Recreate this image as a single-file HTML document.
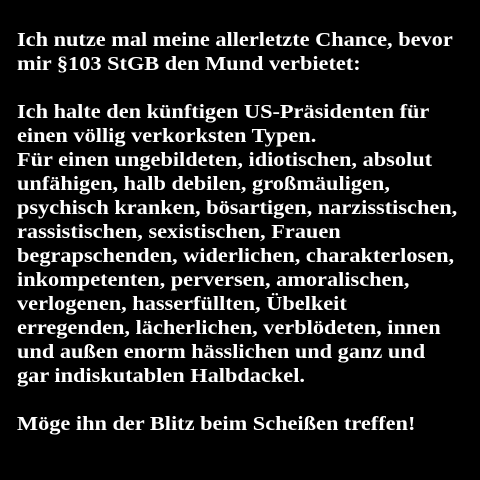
<!DOCTYPE html>
<html><head><meta charset="utf-8"><style>
html,body{margin:0;padding:0;background:#000;width:480px;height:480px;overflow:hidden}
.t{position:absolute;left:17px;top:28px;width:460px;color:#fff;font-family:"Liberation Serif",serif;font-weight:bold;font-size:20px;line-height:24px;white-space:nowrap;transform:scaleX(1.116);transform-origin:0 0}
</style></head><body><div class="t">Ich nutze mal meine allerletzte Chance, bevor<br>mir §103 StGB den Mund verbietet:<br><br>Ich halte den künftigen US-Präsidenten für<br>einen völlig verkorksten Typen.<br>Für einen ungebildeten, idiotischen, absolut<br>unfähigen, halb debilen, großmäuligen,<br>psychisch kranken, bösartigen, narzisstischen,<br>rassistischen, sexistischen, Frauen<br>begrapschenden, widerlichen, charakterlosen,<br>inkompetenten, perversen, amoralischen,<br>verlogenen, hasserfüllten, Übelkeit<br>erregenden, lächerlichen, verblödeten, innen<br>und außen enorm hässlichen und ganz und<br>gar indiskutablen Halbdackel.<br><br>Möge ihn der Blitz beim Scheißen treffen!</div></body></html>
